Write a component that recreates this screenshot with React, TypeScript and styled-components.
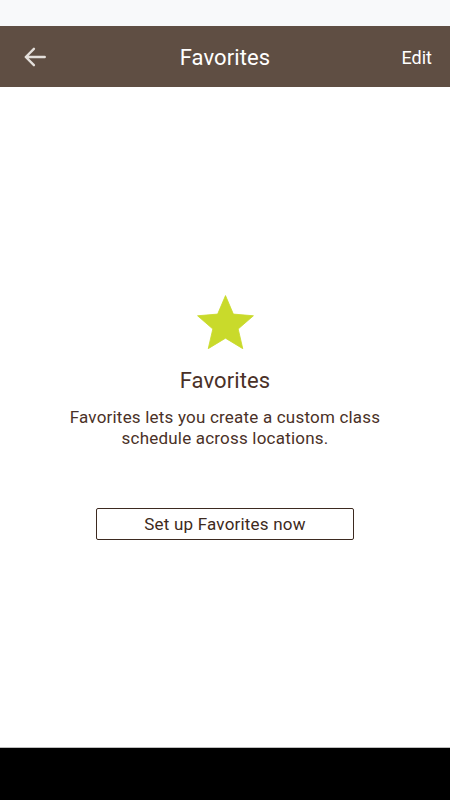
import React from "react";
import styled, { createGlobalStyle } from "styled-components";

const Global = createGlobalStyle`
  html, body { margin: 0; padding: 0; background: #ffffff; }
  body { font-family: Roboto, "Noto Sans", "Liberation Sans", sans-serif; }
  * { box-sizing: border-box; }
`;

const Screen = styled.div`
  width: 450px;
  height: 800px;
  display: flex;
  flex-direction: column;
  background: #ffffff;
`;

const StatusBar = styled.div`
  height: 26px;
  background: #f8f9fa;
  flex: none;
`;

const Header = styled.header`
  height: 61px;
  flex: none;
  background: #5f4e43;
  display: grid;
  grid-template-columns: 80px 1fr 80px;
  align-items: center;
`;

const BackButton = styled.button`
  border: 0;
  background: transparent;
  padding: 0 0 0 22px;
  height: 100%;
  display: flex;
  align-items: center;
  cursor: pointer;
`;

const HeaderTitle = styled.h1`
  margin: 2px 0 0;
  text-align: center;
  color: #ffffff;
  font-size: 22px;
  font-weight: 400;
  letter-spacing: 0.1px;
`;

const EditButton = styled.button`
  border: 0;
  background: transparent;
  color: #ffffff;
  font-family: inherit;
  font-size: 18px;
  text-align: right;
  padding: 2px 18px 0 0;
  height: 100%;
  cursor: pointer;
`;

const Content = styled.main`
  flex: 1;
  display: flex;
  flex-direction: column;
  align-items: center;
  padding-top: 203px;
`;

const StarIcon = styled.svg`
  width: 67px;
  height: 67px;
  display: block;
`;

const EmptyTitle = styled.h2`
  margin: 10px 0 0;
  font-size: 22px;
  font-weight: 400;
  color: #4a3127;
  line-height: 28px;
  letter-spacing: 0.1px;
`;

const EmptyText = styled.p`
  margin: 12px 0 0;
  font-size: 17px;
  line-height: 21px;
  letter-spacing: 0.2px;
  color: #4a3127;
  text-align: center;
  width: 340px;
`;

const SetupButton = styled.button`
  margin-top: 59px;
  width: 258px;
  height: 32px;
  border: 1px solid #3d2a20;
  border-radius: 2px;
  background: #ffffff;
  color: #3d2a20;
  font-family: inherit;
  font-size: 17px;
  letter-spacing: 0.2px;
  cursor: pointer;
`;

const NavDivider = styled.div`
  height: 1px;
  flex: none;
  background: #bdbdbd;
`;

const NavBar = styled.div`
  height: 52px;
  flex: none;
  background: #000000;
`;

export default function App() {
  return (
    <Screen>
      <Global />
      <StatusBar />
      <Header>
        <BackButton aria-label="Back">
          <svg width="26" height="26" viewBox="0 0 24 24" fill="none">
            <path
              d="M21 12H3.5M11 4.5L3.5 12l7.5 7.5"
              stroke="#e4dfdb"
              strokeWidth="2.2"
              strokeLinecap="round"
              strokeLinejoin="round"
            />
          </svg>
        </BackButton>
        <HeaderTitle>Favorites</HeaderTitle>
        <EditButton>Edit</EditButton>
      </Header>
      <Content>
        <StarIcon viewBox="0 0 24 24">
          <path
            d="M12 17.27L18.18 21l-1.64-7.03L22 9.24l-7.19-.61L12 2 9.19 8.63 2 9.24l5.46 4.73L5.82 21z"
            fill="#c9da2b"
            stroke="#c9da2b"
            strokeWidth="0.3"
            strokeLinejoin="round"
          />
        </StarIcon>
        <EmptyTitle>Favorites</EmptyTitle>
        <EmptyText>Favorites lets you create a custom class schedule across locations.</EmptyText>
        <SetupButton>Set up Favorites now</SetupButton>
      </Content>
      <NavDivider />
      <NavBar />
    </Screen>
  );
}
